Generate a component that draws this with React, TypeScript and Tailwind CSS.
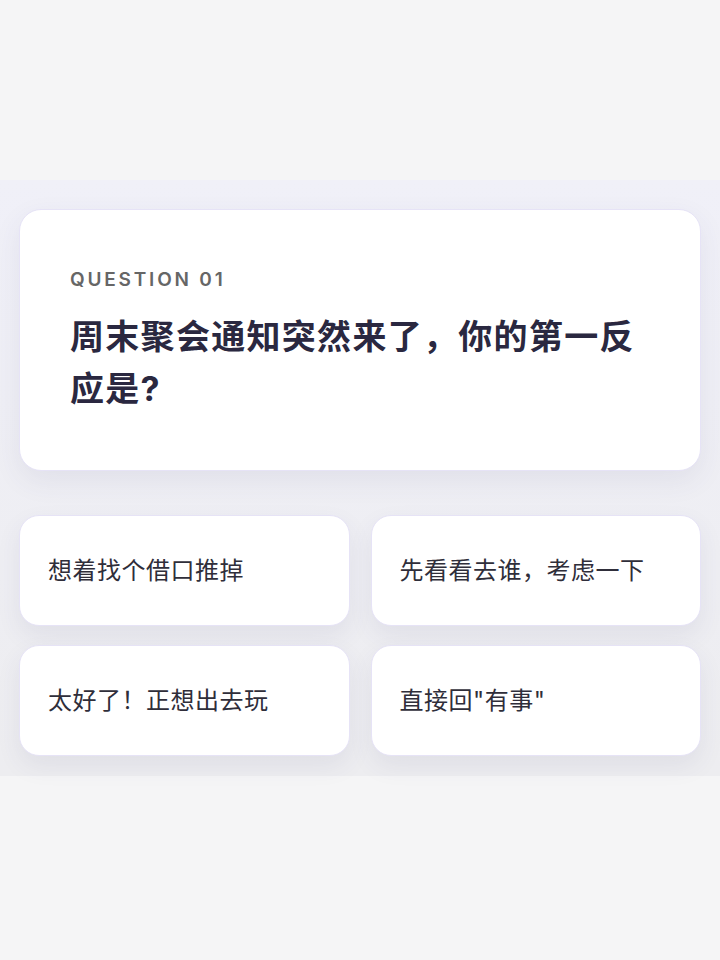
const options = [
  "想着找个借口推掉",
  "先看看去谁，考虑一下",
  "太好了！正想出去玩",
  '直接回"有事"',
];

export default function App() {
  return (
    <div className="min-h-[960px] w-full bg-[#f5f5f6] pt-[180px] font-['Inter','Noto_Sans_CJK_SC',sans-serif]">
      <section className="bg-gradient-to-b from-[#f0f0f8] to-[#ededf0] px-[19px] pt-[29px] pb-[20px]">
        <div className="rounded-[22px] border border-[#e6e3f6] bg-white px-[50px] pt-[58px] pb-[55px] shadow-[0_10px_28px_rgba(70,70,110,0.08)]">
          <p className="text-[19px] font-semibold leading-[24px] tracking-[2.8px] text-[#666]">
            QUESTION 01
          </p>
          <h1 className="mt-[19px] text-[34px] font-bold leading-[52px] tracking-[1.3px] text-[#2a2840]">
            周末聚会通知突然来了，你的第一反应是?
          </h1>
        </div>

        <div className="mt-[44px] grid grid-cols-2 gap-x-[21px] gap-y-[19px]">
          {options.map((o) => (
            <button
              key={o}
              className="flex h-[111px] items-center rounded-[20px] border border-[#e6e3f6] bg-white px-[28px] text-left text-[24px] tracking-[0.5px] text-[#2f2e3a] shadow-[0_10px_24px_rgba(70,70,110,0.08)]"
            >
              {o}
            </button>
          ))}
        </div>
      </section>
    </div>
  );
}
